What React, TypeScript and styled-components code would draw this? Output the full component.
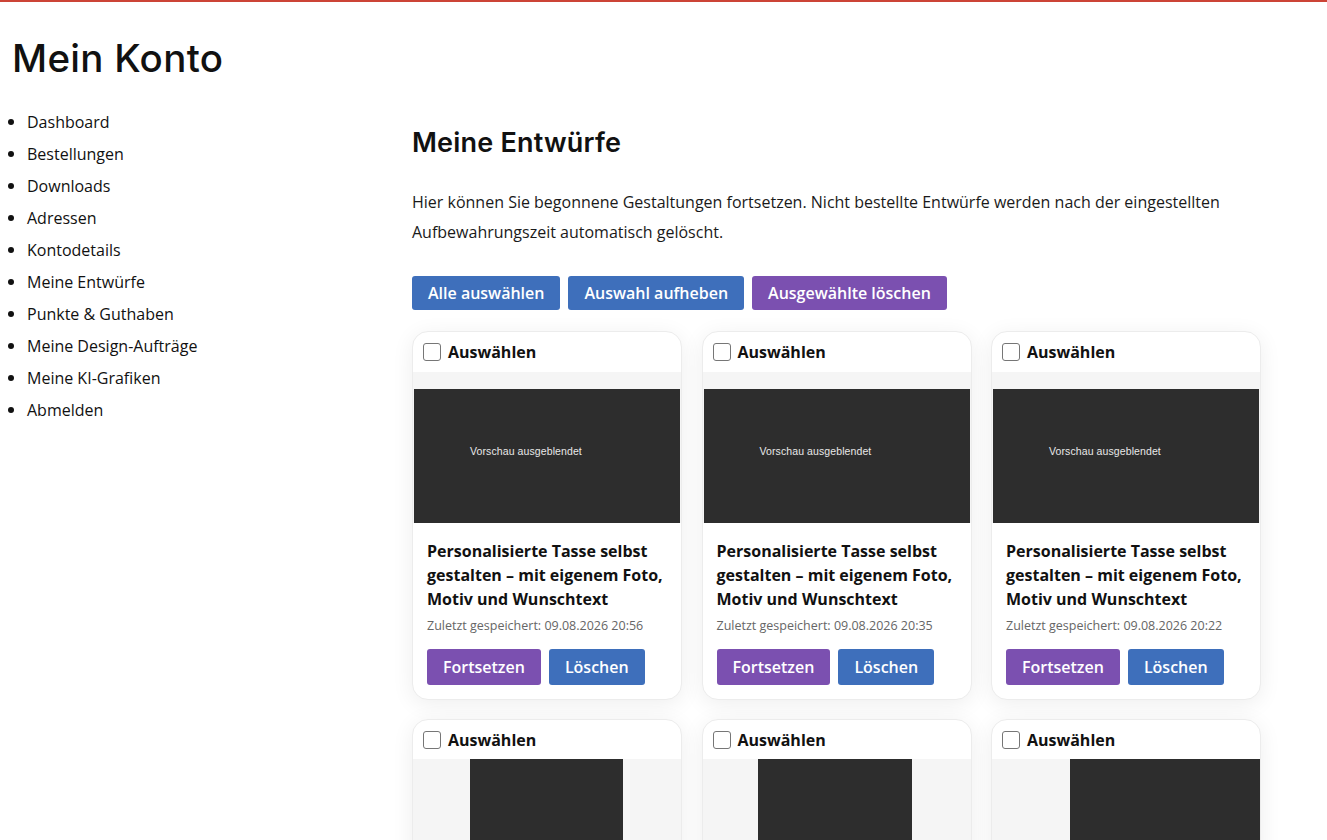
import React from 'react';
import styled, { createGlobalStyle } from 'styled-components';

const GlobalStyle = createGlobalStyle`
  * {
    box-sizing: border-box;
  }

  body {
    margin: 0;
    background: #ffffff;
    color: #111111;
    font-family: 'Open Sans', 'Liberation Sans', sans-serif;
    font-size: 16px;
    border-top: 2px solid #cc4436;
  }
`;

const Page = styled.div`
  padding: 0 0 40px 0;
`;

const PageTitle = styled.h1`
  margin: 33px 0 0 12px;
  font-family: Inter, 'Noto Sans', sans-serif;
  font-weight: 500;
  font-size: 38.5px;
  line-height: 46px;
  letter-spacing: 0.3px;
  color: #111111;
`;

const Layout = styled.div`
  display: grid;
  grid-template-columns: 412px 850px;
  margin-top: 25px;
`;

const NavList = styled.ul`
  margin: 0;
  padding-left: 27px;
  list-style: disc;
`;

const NavItem = styled.li`
  line-height: 32px;
  font-size: 16px;
  color: #111111;

  &::marker {
    font-size: 17px;
  }
`;

const Main = styled.main`
  display: flex;
  flex-direction: column;
`;

const SectionTitle = styled.h2`
  margin: 21px 0 0 0;
  font-family: Inter, 'Noto Sans', sans-serif;
  font-weight: 600;
  font-size: 27px;
  line-height: 32px;
  letter-spacing: 0.2px;
  color: #111111;
`;

const Intro = styled.p`
  margin: 28px 0 0 0;
  font-size: 16px;
  line-height: 30px;
  color: #1a1a1a;
`;

const Toolbar = styled.div`
  display: flex;
  gap: 8px;
  margin-top: 29px;
`;

const Button = styled.button<{ $variant: 'blue' | 'purple'; $h?: number }>`
  height: ${({ $h }) => $h ?? 34}px;
  padding: 0 16px;
  border: none;
  border-radius: 3px;
  font-family: 'Open Sans', 'Liberation Sans', sans-serif;
  font-weight: 600;
  font-size: 16px;
  color: #ffffff;
  cursor: pointer;
  background: ${({ $variant }) => ($variant === 'blue' ? '#3e6fbb' : '#7b50b0')};
`;

const Grid = styled.div`
  display: grid;
  grid-template-columns: repeat(3, 270px);
  gap: 19px 19.5px;
  margin-top: 21px;
`;

const Card = styled.div`
  background: #ffffff;
  border: 1px solid #ececec;
  border-radius: 16px;
  overflow: hidden;
  box-shadow: 0 4px 22px rgba(0, 0, 0, 0.07);
`;

const CardHeader = styled.label`
  display: flex;
  align-items: center;
  gap: 7px;
  height: 40px;
  padding: 0 10px;
  font-weight: 700;
  font-size: 16px;
  color: #111111;
`;

const Check = styled.span`
  width: 18px;
  height: 18px;
  border: 1.5px solid #767676;
  border-radius: 3px;
  background: #ffffff;
`;

const Preview = styled.div<{ $portrait?: boolean }>`
  background: #f5f5f5;
  padding: ${({ $portrait }) => ($portrait ? '0' : '17px 1px 0 1px')};
  height: ${({ $portrait }) => ($portrait ? '151px' : 'auto')};
  margin-top: ${({ $portrait }) => ($portrait ? '-1px' : '0')};
`;

const Shot = styled.div<{ $w?: number; $left?: number }>`
  height: ${({ $w }) => ($w ? '152px' : '134px')};
  width: ${({ $w }) => ($w ? `${$w}px` : '100%')};
  margin-left: ${({ $left }) => $left ?? 0}px;
  background: #2d2d2d;
  display: flex;
  align-items: center;
  padding: 0 0 10px 56px;
`;

const ShotLabel = styled.span`
  font-family: 'Liberation Sans', Arial, sans-serif;
  font-size: 10.5px;
  letter-spacing: 0.1px;
  color: #e8e8e8;
  white-space: nowrap;
`;

const CardBody = styled.div`
  padding: 16px 14px 14px 14px;
`;

const CardTitle = styled.h3`
  margin: 0;
  font-weight: 700;
  font-size: 16px;
  line-height: 24px;
  color: #111111;
`;

const Meta = styled.div`
  margin-top: 5px;
  font-size: 12.5px;
  line-height: 20px;
  color: #666666;
`;

const Actions = styled.div`
  display: flex;
  gap: 8px;
  margin-top: 13px;
`;

const navItems = [
  'Dashboard',
  'Bestellungen',
  'Downloads',
  'Adressen',
  'Kontodetails',
  'Meine Entwürfe',
  'Punkte & Guthaben',
  'Meine Design-Aufträge',
  'Meine KI-Grafiken',
  'Abmelden',
];

interface Draft {
  saved: string;
  portrait?: { w: number; left: number };
}

const drafts: Draft[] = [
  { saved: '09.08.2026 20:56' },
  { saved: '09.08.2026 20:35' },
  { saved: '09.08.2026 20:22' },
  { saved: '09.08.2026 20:10', portrait: { w: 153, left: 57 } },
  { saved: '09.08.2026 19:58', portrait: { w: 154, left: 55 } },
  { saved: '09.08.2026 19:41', portrait: { w: 200, left: 78 } },
];

const DraftCard: React.FC<{ draft: Draft }> = ({ draft }) => (
  <Card>
    <CardHeader>
      <Check />
      Auswählen
    </CardHeader>
    <Preview $portrait={!!draft.portrait}>
      {draft.portrait ? (
        <Shot $w={draft.portrait.w} $left={draft.portrait.left} />
      ) : (
        <Shot>
          <ShotLabel>Vorschau ausgeblendet</ShotLabel>
        </Shot>
      )}
    </Preview>
    <CardBody>
      <CardTitle>Personalisierte Tasse selbst gestalten – mit eigenem Foto, Motiv und Wunschtext</CardTitle>
      <Meta>Zuletzt gespeichert: {draft.saved}</Meta>
      <Actions>
        <Button $variant="purple" $h={36}>Fortsetzen</Button>
        <Button $variant="blue" $h={36}>Löschen</Button>
      </Actions>
    </CardBody>
  </Card>
);

const App: React.FC = () => (
  <Page>
    <GlobalStyle />
    <PageTitle>Mein Konto</PageTitle>
    <Layout>
      <NavList>
        {navItems.map((item) => (
          <NavItem key={item}>{item}</NavItem>
        ))}
      </NavList>
      <Main>
        <SectionTitle>Meine Entwürfe</SectionTitle>
        <Intro>
          Hier können Sie begonnene Gestaltungen fortsetzen. Nicht bestellte Entwürfe werden nach der eingestellten
          Aufbewahrungszeit automatisch gelöscht.
        </Intro>
        <Toolbar>
          <Button $variant="blue">Alle auswählen</Button>
          <Button $variant="blue">Auswahl aufheben</Button>
          <Button $variant="purple">Ausgewählte löschen</Button>
        </Toolbar>
        <Grid>
          {drafts.map((d) => (
            <DraftCard key={d.saved} draft={d} />
          ))}
        </Grid>
      </Main>
    </Layout>
  </Page>
);

export default App;
